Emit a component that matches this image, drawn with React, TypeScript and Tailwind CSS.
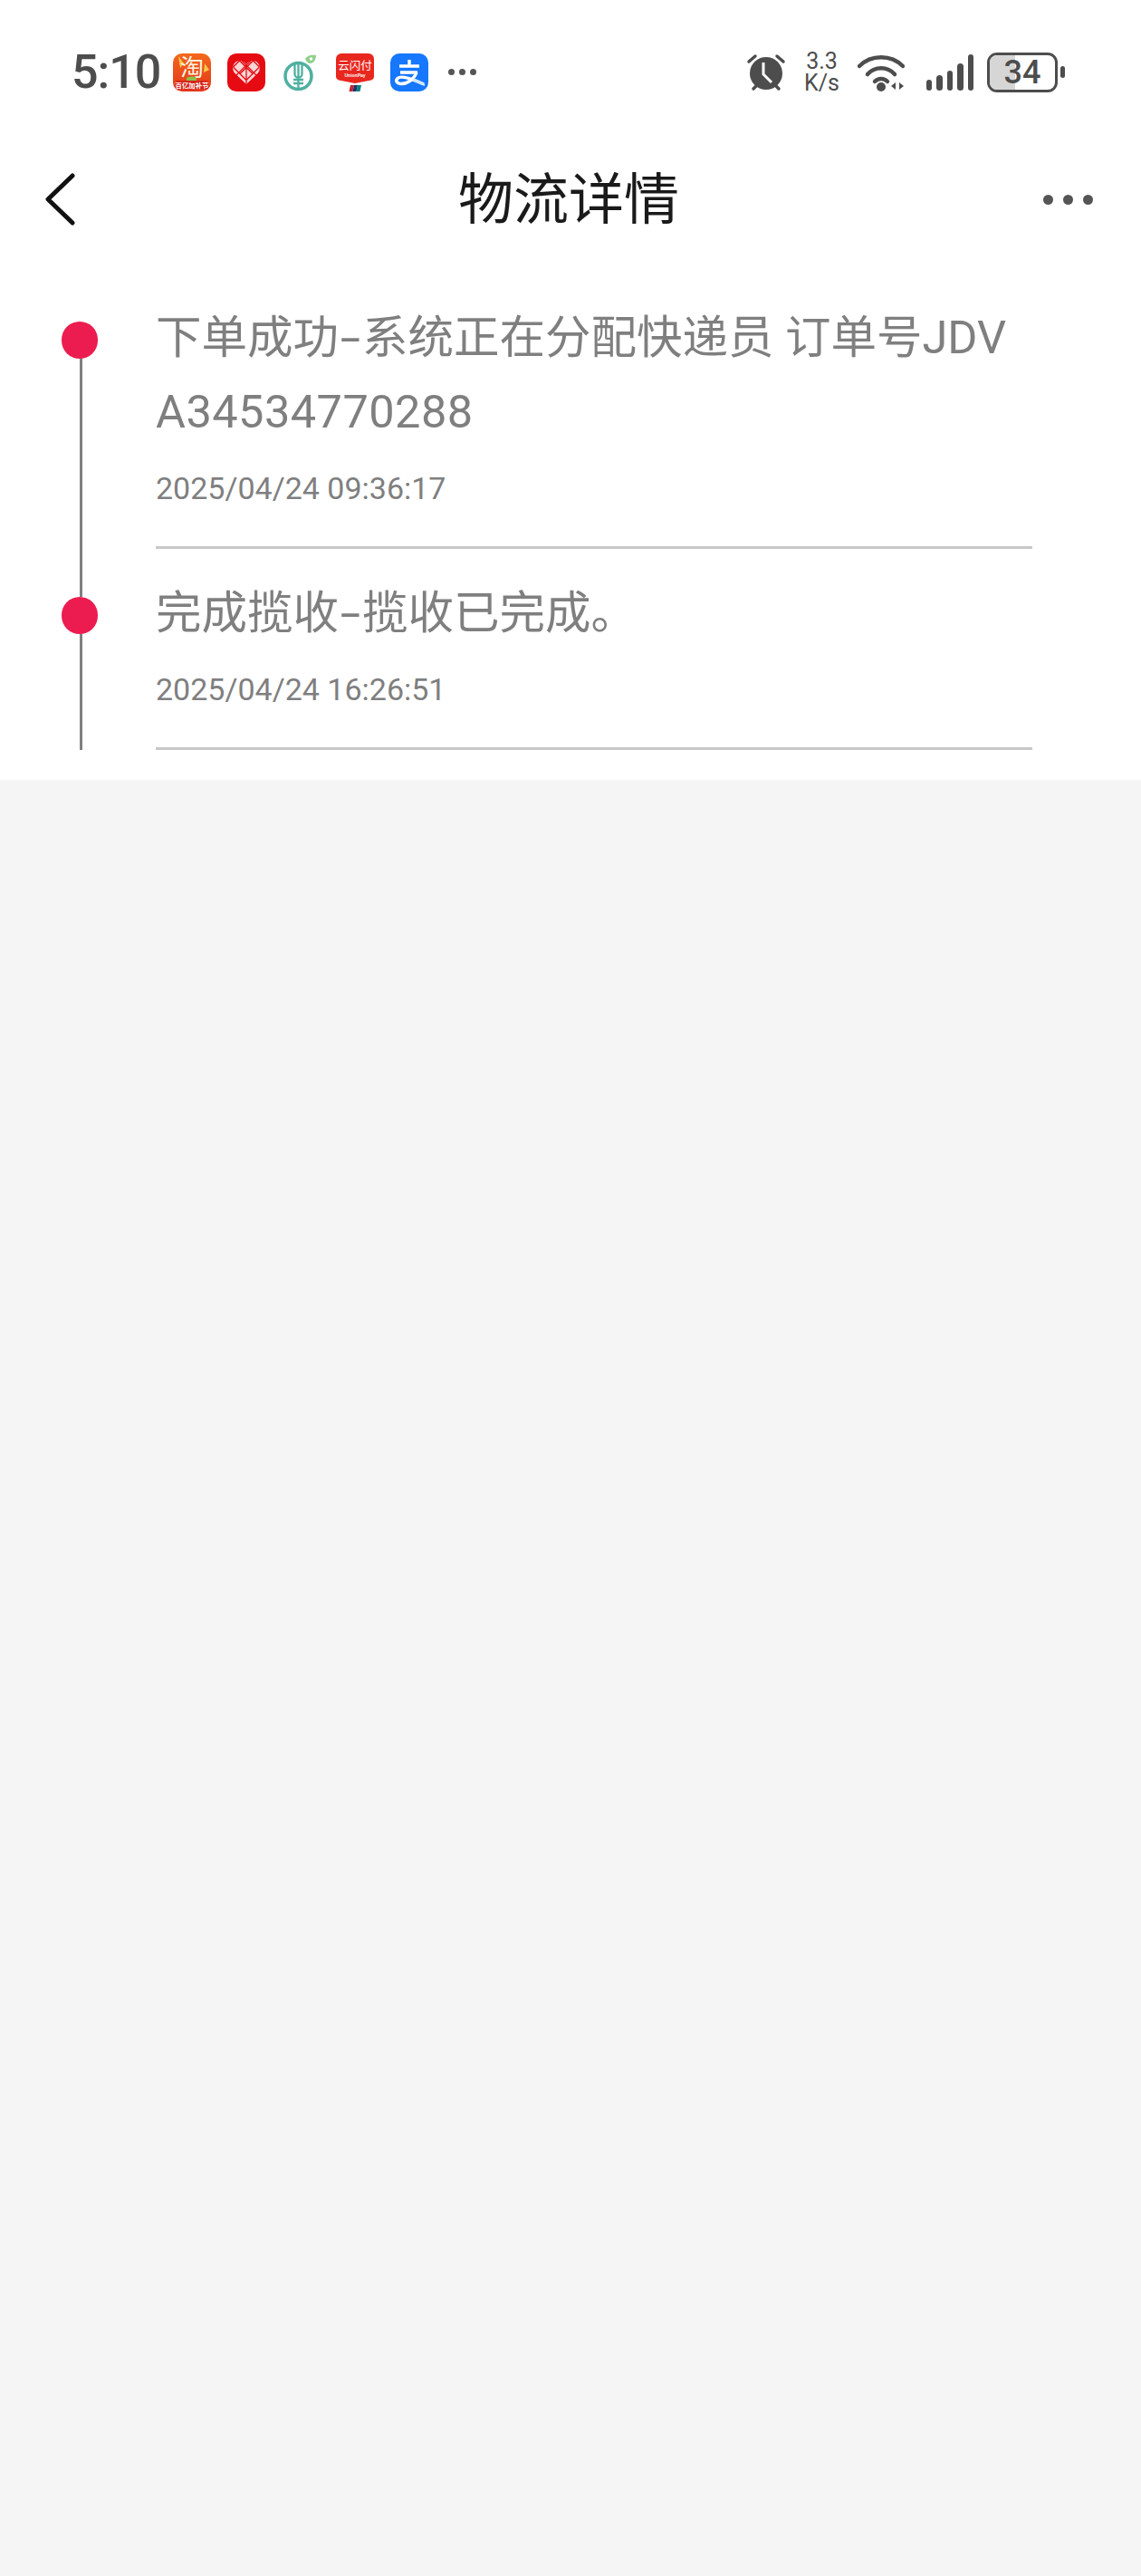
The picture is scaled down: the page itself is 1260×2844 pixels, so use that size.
const cjk = "font-['Roboto','Noto_Sans_CJK_SC',sans-serif]";

function TaobaoIcon() {
  return (
    <svg width="42" height="42" viewBox="0 0 42 42" className="shrink-0 overflow-visible">
      <defs>
        <linearGradient id="tb" x1="0" y1="0" x2="0" y2="1">
          <stop offset="0" stopColor="#f4681c" />
          <stop offset="1" stopColor="#e2361b" />
        </linearGradient>
      </defs>
      <rect width="42" height="42" rx="10" fill="url(#tb)" />
      <path d="M6 3l6 8-4 5zM35 11l5 7-6 3z" fill="#f5c94a" />
      <text x="21" y="25" textAnchor="middle" fontSize="26" fill="#fff4e4" fontFamily="Noto Sans CJK SC">淘</text>
      <path d="M15 27c3-2 8-2 11 0v3H15z" fill="#8cc04a" />
      <rect x="3" y="30" width="36" height="9.500" rx="2" fill="#d4231a" />
      <text x="21" y="38" textAnchor="middle" fontSize="7.400" fontWeight="700" fill="#fff" fontFamily="Noto Sans CJK SC">百亿加补节</text>
    </svg>
  );
}

function PddIcon() {
  return (
    <svg width="42" height="42" viewBox="0 0 42 42" className="shrink-0">
      <rect width="42" height="42" rx="10" fill="#e60b12" />
      <path d="M21 34L8 21.500C4 16.500 7 8 13.500 8C16.800 8 19.500 9.500 21 12C22.500 9.500 25.200 8 28.500 8C35 8 38 16.500 34 21.500Z" fill="#f8d5d6" />
      <path d="M21 12V34M13.500 8L28 22.500M28.500 8L14 22.500M6.500 15L21 29.500M35.500 15L21 29.500M6.500 15L13.500 8M35.500 15L28.500 8M10 24L26 8M32 24L16 8" stroke="#e60b12" strokeWidth="1.300" fill="none" />
    </svg>
  );
}

function AbcIcon() {
  return (
    <svg width="42" height="42" viewBox="0 0 42 42" className="shrink-0">
      <circle cx="18.500" cy="25" r="14.500" fill="none" stroke="#4fb0a0" strokeWidth="3.500" />
      <path d="M14.500 10v13c0 2 2 3.500 4 3.500s4-1.500 4-3.500V10M18.500 9v30M13 29h11M13 33h11" fill="none" stroke="#4fb0a0" strokeWidth="2.300" />
      <path d="M26 6c2-4 8-5 12-4 0 4-2 9-7 9-2 0-4-3-5-5z" fill="#8ed08a" />
      <circle cx="32.500" cy="6" r="1.800" fill="#fff" />
    </svg>
  );
}

function UnionPayIcon() {
  return (
    <svg width="42" height="42" viewBox="0 0 42 42" className="shrink-0">
      <path d="M6 0h30a6 6 0 0 1 6 6v20a4 4 0 0 1-3 3.500L21 33 3 29.500A4 4 0 0 1 0 26V6a6 6 0 0 1 6-6z" fill="#e8281f" />
      <text x="21" y="18" textAnchor="middle" fontSize="12.500" fill="#fff" fontFamily="Noto Sans CJK SC">云闪付</text>
      <text x="21" y="26" textAnchor="middle" fontSize="5" fontWeight="700" fill="#fff" fontFamily="Liberation Sans">UnionPay</text>
      <path d="M16 35h4l-1.500 7h-4z" fill="#c8202f" />
      <path d="M20 35h4l-1.500 7h-4z" fill="#17356f" />
      <path d="M24 35h4l-1.500 7h-4z" fill="#0f7f7a" />
    </svg>
  );
}

function AlipayIcon() {
  return (
    <svg width="42" height="42" viewBox="0 0 42 42" className="shrink-0">
      <rect width="42" height="42" rx="10" fill="#1677ff" />
      <path d="M21 7v8M10 14h22M11 21h19" stroke="#fff" strokeWidth="3.500" fill="none" />
      <path d="M29 21C26 29 18 34 11 33.500C7 33 5.500 30 8 27.500C12 24 22 27 37 34" stroke="#fff" strokeWidth="3.500" fill="none" />
      <path d="M26 27.500C30 29 33 31 38 33.500V36C33 34 30 32 25 30Z" fill="#cfe3fb" />
    </svg>
  );
}

function AlarmIcon() {
  return (
    <svg width="44" height="42" viewBox="0 0 44 42" className="shrink-0">
      <circle cx="22" cy="22" r="18" fill="#4d4d4d" />
      <path d="M3 9l7-6M41 9l-7-6M8 39l4-4M36 39l-4-4" stroke="#4d4d4d" strokeWidth="3.500" strokeLinecap="round" />
      <path d="M19 10v13l9 9" stroke="#fff" strokeWidth="3" fill="none" />
    </svg>
  );
}

function WifiIcon() {
  return (
    <svg width="52" height="42" viewBox="0 0 52 42" className="shrink-0">
      <path d="M2 14C15 1 37 1 50 14" stroke="#4d4d4d" strokeWidth="4.500" fill="none" strokeLinecap="round" />
      <path d="M11 23C19 14 33 14 41 23" stroke="#4d4d4d" strokeWidth="4.500" fill="none" strokeLinecap="round" />
      <path d="M19 31C23 27 29 27 33 31" stroke="#4d4d4d" strokeWidth="4.500" fill="none" strokeLinecap="round" />
      <circle cx="26" cy="37" r="5" fill="#4d4d4d" />
      <path d="M42 32v8l-5-4zM46 32v8l5-4z" fill="#4d4d4d" />
    </svg>
  );
}

function SignalIcon() {
  const bars = [12, 17, 22, 30, 40];
  return (
    <div className="flex h-[40px] shrink-0 items-end gap-[5px]">
      {bars.map((h) => (
        <div key={h} className="w-[6.500px] rounded-full bg-[#4d4d4d]" style={{ height: h }} />
      ))}
    </div>
  );
}

function Battery() {
  return (
    <div className="flex shrink-0 items-center gap-[3px]">
      <div className="relative h-[44px] w-[78px] overflow-hidden rounded-[11px] border-[3px] border-[#4d4d4d]">
        <div className="h-full w-[28px] bg-[#d6d6d6]" />
        <span className={`absolute inset-0 flex items-center justify-center text-[36px] font-medium leading-none text-[#4d4d4d] ${cjk}`}>34</span>
      </div>
      <div className="h-[13px] w-[5px] rounded-full bg-[#4d4d4d]" />
    </div>
  );
}

function StatusBar() {
  return (
    <div className="flex h-[158px] items-center pl-[79px] pr-[84px] pt-[1px]">
      <span className={`mr-[14px] whitespace-nowrap text-[52px] font-medium leading-[60px] tracking-[-1px] text-[#4d4d4d] ${cjk}`}>5:10</span>
      <div className="flex items-center gap-[18px]">
        <TaobaoIcon />
        <PddIcon />
        <AbcIcon />
      </div>
      <div className="ml-[18px] flex items-center gap-[18px]">
        <UnionPayIcon />
        <AlipayIcon />
      </div>
      <div className="ml-[22px] flex gap-[5px]">
        <div className="h-[7px] w-[7px] rounded-full bg-[#555555]" />
        <div className="h-[7px] w-[7px] rounded-full bg-[#555555]" />
        <div className="h-[7px] w-[7px] rounded-full bg-[#555555]" />
      </div>
      <div className="ml-auto flex items-center">
        <AlarmIcon />
        <div className={`ml-[19px] flex w-[42px] flex-col items-center text-[25px] leading-[24px] text-[#4d4d4d] ${cjk}`}>
          <span>3.3</span>
          <span>K/s</span>
        </div>
        <div className="ml-[18px]">
          <WifiIcon />
        </div>
        <div className="ml-[24px]">
          <SignalIcon />
        </div>
        <div className="ml-[15px]">
          <Battery />
        </div>
      </div>
    </div>
  );
}

function Header() {
  return (
    <div className="flex h-[124px] items-center justify-between pl-[48px] pr-[53px]">
      <svg width="36" height="58" viewBox="0 0 36 58" className="shrink-0">
        <path d="M32 3L5 29L32 55" stroke="#111111" strokeWidth="5" fill="none" strokeLinecap="round" strokeLinejoin="round" />
      </svg>
      <h1 className={`ml-[20px] mt-[3px] text-[61px] font-normal leading-none text-[#1a1a1a] ${cjk}`}>物流详情</h1>
      <div className="flex gap-[11px]">
        <div className="h-[11px] w-[11px] rounded-full bg-[#555555]" />
        <div className="h-[11px] w-[11px] rounded-full bg-[#555555]" />
        <div className="h-[11px] w-[11px] rounded-full bg-[#555555]" />
      </div>
    </div>
  );
}

function Hyphen() {
  return <span className="inline-block scale-x-[1.6] px-[6px]">-</span>;
}

function Timeline() {
  return (
    <div className="mt-[73px] pb-[33px] pl-[68px] pr-[120px]">
      <div className="flex">
        <div className="flex w-[40px] shrink-0 flex-col items-center">
          <div className="h-[41px] w-[40px] shrink-0 rounded-full bg-[#ec1c50]" />
          <div className="ml-[2px] w-[3px] flex-1 bg-[#808080]" />
        </div>
        <div className={`ml-[64px] flex-1 pb-[53px] ${cjk}`}>
          <div className="-mt-[23px] text-[50.500px] leading-[82px] text-[#7f7f7f]">
            <div className="whitespace-pre">下单成功<Hyphen />系统正在分配快递员 订单号JDV</div>
            <div className="whitespace-pre tracking-[0.45px]">A34534770288</div>
          </div>
          <div className="mt-[23px] text-[34px] leading-[40px] text-[#7f7f7f]">2025/04/24 09:36:17</div>
          <div className="mt-[44px] h-[3px] bg-[#c8c8c8]" />
        </div>
      </div>
      <div className="flex">
        <div className="flex w-[40px] shrink-0 flex-col items-center">
          <div className="h-[41px] w-[40px] shrink-0 rounded-full bg-[#ec1c50]" />
          <div className="ml-[2px] w-[3px] flex-1 bg-[#808080]" />
        </div>
        <div className={`ml-[64px] flex-1 ${cjk}`}>
          <div className="-mt-[23px] whitespace-pre text-[50.500px] leading-[82px] text-[#7f7f7f]">完成揽收<Hyphen />揽收已完成。</div>
          <div className="mt-[23px] text-[34px] leading-[40px] text-[#7f7f7f]">2025/04/24 16:26:51</div>
          <div className="mt-[44px] h-[3px] bg-[#c8c8c8]" />
        </div>
      </div>
    </div>
  );
}

export default function App() {
  return (
    <div className="min-h-[2844px] bg-[#f5f5f5]">
      <div className="bg-white">
        <StatusBar />
        <Header />
        <Timeline />
      </div>
    </div>
  );
}
